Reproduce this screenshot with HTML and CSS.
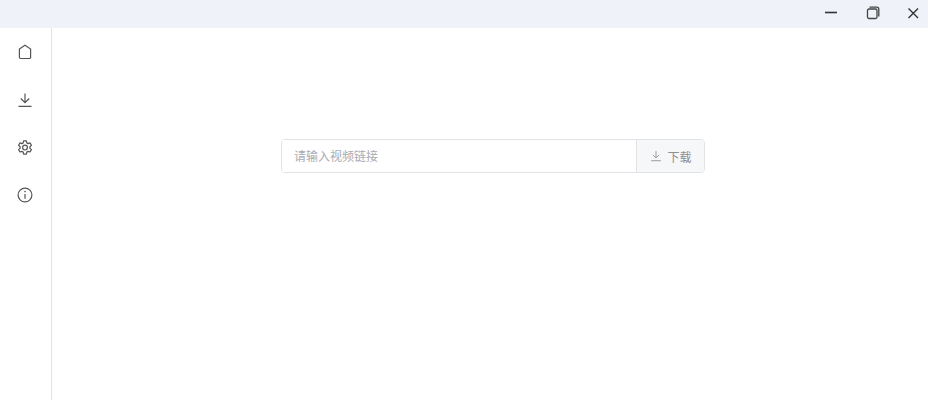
FILE: index.html
```html
<!DOCTYPE html>
<html lang="zh">
<head>
<meta charset="utf-8">
<title>视频下载</title>
<link rel="stylesheet" href="styles.css">
</head>
<body>
<div class="app">
  <header class="titlebar">
    <button class="win-btn win-min" aria-label="最小化">
      <svg width="14" height="14" viewBox="0 0 14 14"><path d="M1 6.5h12" stroke="#333" stroke-width="1.6" fill="none"/></svg>
    </button>
    <button class="win-btn win-max" aria-label="最大化">
      <svg width="14" height="14" viewBox="0 0 14 14" fill="none" stroke="#444" stroke-width="1.3"><rect x="1.5" y="3" width="9.5" height="9.5" rx="1.5"/><path d="M3.5 1.2h7.3a2 2 0 0 1 2 2v7.3"/></svg>
    </button>
    <button class="win-btn win-close" aria-label="关闭">
      <svg width="14" height="14" viewBox="0 0 14 14"><path d="M2.5 2.5l9.5 9.5M12 2.5l-9.5 9.5" stroke="#333" stroke-width="1.4" fill="none"/></svg>
    </button>
  </header>
  <div class="body">
    <nav class="sidebar">
      <a class="nav-item">
        <svg width="16" height="16" viewBox="0 0 16 16" fill="none" stroke="#555" stroke-width="1.2"><path d="M2.4 5 8 1.2 13.6 5v8.3a1.2 1.2 0 0 1-1.2 1.2H3.6a1.2 1.2 0 0 1-1.2-1.2z"/></svg>
      </a>
      <a class="nav-item">
        <svg width="16" height="16" viewBox="0 0 16 16" fill="none" stroke="#555" stroke-width="1.2"><path d="M8 1.5v9M3.8 6.5 8 10.7l4.2-4.2M1.5 14.3h13"/></svg>
      </a>
      <a class="nav-item">
        <svg width="16" height="16" viewBox="0 -0.6 16 16" fill="none" stroke="#555" stroke-width="1.2"><path d="M6.6 1.3h2.8l.4 2 1.3.7 1.9-.7 1.4 2.4-1.5 1.4v1.6l1.5 1.3-1.4 2.4-1.9-.6-1.3.7-.4 2H6.6l-.4-2-1.3-.7-1.9.6-1.4-2.4 1.5-1.3V7.1L1.6 5.7 3 3.3l1.9.7 1.3-.7z" stroke-linejoin="round"/><circle cx="8" cy="8" r="2.4"/></svg>
      </a>
      <a class="nav-item">
        <svg width="16" height="16" viewBox="0 0 16 16" fill="none" stroke="#555" stroke-width="1.2"><circle cx="8" cy="8" r="6.9"/><path d="M8 7v4.8"/><circle cx="8" cy="4.6" r=".8" fill="#555" stroke="none"/></svg>
      </a>
    </nav>
    <main class="content">
      <form class="search">
        <input class="search-input" type="text" placeholder="请输入视频链接">
        <button class="search-btn" type="button">
          <svg width="12" height="12" viewBox="0 0 16 16" fill="none" stroke="#999" stroke-width="1.3"><path d="M8 1.5v9M3.8 6.5 8 10.7l4.2-4.2M1.5 14.3h13"/></svg>
          <span>下载</span>
        </button>
      </form>
    </main>
  </div>
</div>
</body>
</html>
```
FILE: styles.css
```css
* { box-sizing: border-box; }
html, body { margin: 0; height: 100%; background: #fff; }
body { font-family: "Liberation Sans", "Noto Sans CJK SC", sans-serif; overflow: hidden; }
.app { display: flex; flex-direction: column; width: 928px; height: 400px; }
.titlebar {
  flex: none; height: 28px; background: #eff2f9;
  display: flex; justify-content: flex-end; align-items: flex-start;
  padding-right: 8px;
}
.win-btn {
  width: 14px; height: 14px; padding: 0; margin: 6px 0 0 27px;
  background: none; border: 0; display: block;
}
.win-btn svg { display: block; }
.win-max { margin-left: 28px; }
.win-close { margin-left: 26px; }
.body { flex: 1; display: flex; min-height: 0; }
.sidebar {
  flex: none; width: 52px; border-right: 1px solid #e4e4e6;
  display: flex; flex-direction: column; align-items: center;
  padding: 16px 2px 0 0; gap: 31.6px;
}
.nav-item { display: block; width: 16px; height: 16px; }
.nav-item svg { display: block; }
.content { flex: 1; padding: 111px 0 0 229px; }
.search {
  display: flex; width: 424px; height: 34px;
  border: 1px solid #e2e3e7; border-radius: 4px; overflow: hidden;
}
.search-input {
  flex: 1; min-width: 0; border: 0; outline: 0; padding: 2px 12px 0;
  font: 12px "Liberation Sans", "Noto Sans CJK SC", sans-serif; color: #606266;
}
.search-input::placeholder { color: #a8abb2; opacity: 1; }
.search-btn {
  flex: none; width: 68px; padding: 0 0 0 1px; border: 0; border-left: 1px solid #e2e3e7;
  background: #f6f7f9; color: #8c8f96;
  display: flex; align-items: center; justify-content: center; gap: 5px;
  font: 12px "Liberation Sans", "Noto Sans CJK SC", sans-serif;
}
.search-btn svg { display: block; margin-top: -1px; }
```
